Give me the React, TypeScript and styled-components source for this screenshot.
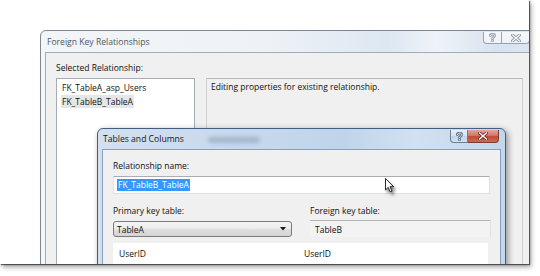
import React from "react";
import styled, { createGlobalStyle } from "styled-components";

const Global = createGlobalStyle`
  html, body { margin: 0; padding: 0; background: #fff; }
  body {
    width: 540px; height: 276px; overflow: hidden;
    font-family: "Open Sans", "Noto Sans", sans-serif;
    font-size: 8.5px; color: #111;
  }
  * { box-sizing: border-box; }
`;

const Stage = styled.div`
  position: relative;
  width: 540px;
  height: 276px;
  background: #fff;
  overflow: hidden;
`;

const Shot = styled.div`
  position: relative;
  width: 529px;
  height: 264px;
  background: #fff;
  overflow: hidden;
  box-shadow: 1px 1px 1px rgba(0, 0, 0, 0.55), 2px 3px 5px rgba(0, 0, 0, 0.38);
`;

/* ---------- outer window ---------- */

const OuterWindow = styled.div`
  position: absolute;
  left: 40px;
  top: 30px;
  width: 497px;
  height: 250px;
  border: 1px solid #7d8792;
  border-radius: 6px 6px 0 0;
  background: linear-gradient(
    90deg,
    #f3f5f8 0%,
    #eef2f6 45%,
    #dde7f2 70%,
    #eef3f8 80%,
    #d7e3f0 92%,
    #dbe6f2 100%
  );
  padding: 0 4px;
  display: flex;
  flex-direction: column;
`;

const TitleBar = styled.div<{ $h: number }>`
  height: ${(p) => p.$h}px;
  flex: none;
  display: flex;
  align-items: flex-start;
`;

const TitleText = styled.div<{ $color: string; $pad: number; $h: number; $grow?: boolean }>`
  flex: ${(p) => (p.$grow ? "1" : "none")};
  height: ${(p) => p.$h}px;
  padding-left: ${(p) => p.$pad}px;
  color: ${(p) => p.$color};
  font-size: 8.6px;
  white-space: nowrap;
  display: flex;
  align-items: center;
`;

const Spacer = styled.div`
  flex: 1;
`;

const CaptionGroup = styled.div<{ $mr: number; $mt: number }>`
  display: flex;
  margin-right: ${(p) => p.$mr}px;
  margin-top: ${(p) => p.$mt}px;
`;

const CaptionButton = styled.div<{ $w: number; $h: number; $variant: "inactive" | "help" | "close" }>`
  width: ${(p) => p.$w}px;
  height: ${(p) => p.$h}px;
  display: flex;
  align-items: center;
  justify-content: center;
  border: 1px solid
    ${(p) => (p.$variant === "close" ? "#7d3a33" : p.$variant === "help" ? "#6b7f98" : "#97a3b1")};
  border-top: none;
  background: ${(p) =>
    p.$variant === "close"
      ? "linear-gradient(180deg, #e3a597 0%, #d27867 45%, #c14a35 55%, #cc6a52 100%)"
      : p.$variant === "help"
      ? "linear-gradient(180deg, #e6eef8 0%, #d5e1ef 50%, #c3d3e6 55%, #d4e2f1 100%)"
      : "linear-gradient(180deg, #f6f8fb 0%, #eef2f6 100%)"};
  &:first-child {
    border-radius: 0 0 0 4px;
  }
  & + & {
    border-left: none;
  }
  &:last-child {
    border-radius: 0 0 4px 0;
  }
`;

const OuterContent = styled.div`
  flex: 1;
  border: 1px solid #a3adb9;
  background: #f0f0f0;
  padding: 9px 8px 0 10px;
  display: flex;
  flex-direction: column;
`;

const Label = styled.div`
  height: 12px;
  line-height: 12px;
  white-space: nowrap;
`;

const SplitRow = styled.div`
  margin-top: 4px;
  flex: 1;
  display: flex;
  gap: 11px;
`;

const ListBox = styled.div`
  width: 139px;
  flex: none;
  background: #fff;
  border: 1px solid #a5acb5;
  padding: 2px 0 0 5px;
`;

const ListItem = styled.div`
  height: 13.5px;
  line-height: 13.5px;
  white-space: nowrap;
`;

const ItemText = styled.span<{ $selected?: boolean }>`
  display: inline-block;
  padding: 0 1px;
  margin-left: -1px;
  background: ${(p) => (p.$selected ? "#e6e6e6" : "transparent")};
`;

const PropBox = styled.div`
  flex: 1;
  border: 1px solid #d0d0d0;
  border-top-color: #b8b8b8;
  padding: 2px 4px;
  line-height: 12px;
  white-space: nowrap;
`;

/* ---------- inner dialog ---------- */

const InnerDialog = styled.div`
  position: absolute;
  left: 97px;
  top: 128px;
  width: 409px;
  height: 150px;
  border: 1px solid #3f5f84;
  border-radius: 6px 6px 0 0;
  background: linear-gradient(
    90deg,
    #d3e0ef 0%,
    #c9daed 30%,
    #bfd4eb 60%,
    #d2e1f1 78%,
    #c2d6ec 100%
  );
  padding: 0 4px;
  display: flex;
  flex-direction: column;
  box-shadow: 2px 2px 6px rgba(0, 0, 0, 0.4);
`;

const GlassSmudge = styled.div`
  width: 52px;
  height: 6px;
  margin-top: 8px;
  margin-left: 24px;
  background: rgba(80, 100, 130, 0.3);
  border-radius: 3px;
  filter: blur(2px);
`;

const InnerContent = styled.div`
  flex: 1;
  border: 1px solid #8aa0ba;
  background: #f0f0f0;
  padding: 10px 10px 0 10px;
  display: flex;
  flex-direction: column;
`;

const TextBox = styled.div`
  margin-top: 4px;
  height: 18px;
  flex: none;
  background: #fff;
  border: 1px solid #dbdfe6;
  border-top-color: #abadb3;
  border-left-color: #e2e3ea;
  padding: 2px 0 0 3px;
  display: flex;
  align-items: flex-start;
`;

const Selected = styled.span`
  background: #3399ff;
  color: #fff;
  height: 12px;
  line-height: 12px;
  padding: 0 1px;
  white-space: nowrap;
`;

const KeyGrid = styled.div`
  margin-top: 11px;
  display: grid;
  grid-template-columns: 179px 181px;
  column-gap: 18px;
`;

const KeyColumn = styled.div`
  display: flex;
  flex-direction: column;
`;

const Combo = styled.div`
  margin-top: 4px;
  height: 16px;
  border: 1px solid #7a7a7a;
  border-radius: 3px;
  background: linear-gradient(180deg, #f4f4f4 0%, #ececec 48%, #dfdfdf 52%, #d4d4d4 100%);
  display: flex;
  align-items: center;
  padding: 0 5px 0 3px;
`;

const ComboText = styled.span`
  flex: 1;
`;

const ReadOnlyField = styled.div`
  margin-top: 3px;
  height: 17px;
  border-top: 1px solid #b4b4b4;
  border-right: 1px solid #e2e2e2;
  background: #f3f3f3;
  display: flex;
  align-items: center;
  padding-left: 5px;
`;

const ColumnsGrid = styled.div`
  margin-top: 6px;
  margin-right: 2px;
  flex: 1;
  background: #fff;
  display: grid;
  grid-template-columns: 185px 1fr;
  grid-auto-rows: 20px;
`;

const Cell = styled.div`
  padding-left: 6px;
  display: flex;
  align-items: center;
`;

const Cursor = styled.svg`
  position: absolute;
  left: 385px;
  top: 178px;
  overflow: visible;
  filter: drop-shadow(2px 3px 1.5px rgba(0, 0, 0, 0.5));
`;

/* ---------- glyphs ---------- */

const HelpGlyph = ({ stroke, fill }: { stroke: string; fill: string }) => (
  <svg width="7" height="9" viewBox="0 0 7 9">
    <path
      d="M1.3 2.6 C1.3 0.6 5.7 0.6 5.7 2.6 C5.7 4.1 3.5 4.1 3.5 5.6"
      fill="none"
      stroke={stroke}
      strokeWidth="2.6"
      strokeLinecap="round"
    />
    <rect x="2.1" y="6.6" width="2.8" height="2.2" rx="0.6" fill={stroke} />
    <path
      d="M1.3 2.6 C1.3 0.6 5.7 0.6 5.7 2.6 C5.7 4.1 3.5 4.1 3.5 5.6"
      fill="none"
      stroke={fill}
      strokeWidth="1"
      strokeLinecap="round"
    />
    <rect x="2.9" y="7.2" width="1.2" height="1" fill={fill} />
  </svg>
);

const CloseGlyph = ({ stroke, fill }: { stroke: string; fill: string }) => (
  <svg width="10" height="8" viewBox="0 0 10 8">
    <path d="M1.5 1 L8.5 7 M8.5 1 L1.5 7" stroke={stroke} strokeWidth="3" strokeLinecap="square" />
    <path d="M1.5 1 L8.5 7 M8.5 1 L1.5 7" stroke={fill} strokeWidth="1.3" strokeLinecap="square" />
  </svg>
);

const ComboArrow = () => (
  <svg width="6" height="4" viewBox="0 0 6 4">
    <path d="M0 0 L6 0 L3 3.5 Z" fill="#1a1a1a" />
  </svg>
);

export default function App() {
  return (
    <>
      <Global />
      <Stage>
        <Shot>
          <OuterWindow>
            <TitleBar $h={21}>
              <TitleText $color="#4d5560" $pad={2} $h={21} $grow>
                Foreign Key Relationships
              </TitleText>
              <CaptionGroup $mr={2} $mt={1}>
                <CaptionButton $w={19} $h={12} $variant="inactive">
                  <HelpGlyph stroke="#8e98a4" fill="#f4f6f9" />
                </CaptionButton>
                <CaptionButton $w={28} $h={12} $variant="inactive">
                  <CloseGlyph stroke="#8e98a4" fill="#f4f6f9" />
                </CaptionButton>
              </CaptionGroup>
            </TitleBar>
            <OuterContent>
              <Label>Selected Relationship:</Label>
              <SplitRow>
                <ListBox>
                  <ListItem>
                    <ItemText>FK_TableA_asp_Users</ItemText>
                  </ListItem>
                  <ListItem>
                    <ItemText $selected>FK_TableB_TableA</ItemText>
                  </ListItem>
                </ListBox>
                <PropBox>Editing properties for existing relationship.</PropBox>
              </SplitRow>
            </OuterContent>
          </OuterWindow>

          <InnerDialog>
            <TitleBar $h={20}>
              <TitleText $color="#141414" $pad={1} $h={20}>
                Tables and Columns
              </TitleText>
              <GlassSmudge />
              <Spacer />
              <CaptionGroup $mr={2} $mt={1}>
                <CaptionButton $w={18} $h={13} $variant="help">
                  <HelpGlyph stroke="#51627a" fill="#ffffff" />
                </CaptionButton>
                <CaptionButton $w={31} $h={13} $variant="close">
                  <CloseGlyph stroke="#6e2a22" fill="#ffffff" />
                </CaptionButton>
              </CaptionGroup>
            </TitleBar>
            <InnerContent>
              <Label>Relationship name:</Label>
              <TextBox>
                <Selected>FK_TableB_TableA</Selected>
              </TextBox>
              <KeyGrid>
                <KeyColumn>
                  <Label>Primary key table:</Label>
                  <Combo>
                    <ComboText>TableA</ComboText>
                    <ComboArrow />
                  </Combo>
                </KeyColumn>
                <KeyColumn>
                  <Label>Foreign key table:</Label>
                  <ReadOnlyField>TableB</ReadOnlyField>
                </KeyColumn>
              </KeyGrid>
              <ColumnsGrid>
                <Cell>UserID</Cell>
                <Cell>UserID</Cell>
              </ColumnsGrid>
            </InnerContent>
          </InnerDialog>

          <Cursor width="10" height="15" viewBox="0 0 10 15">
            <path
              d="M0.5 0.5 L0.5 12 L3.2 9.4 L5.2 13.9 L7 13.1 L5 8.7 L8.6 8.7 Z"
              fill="#ffffff"
              stroke="#111"
              strokeWidth="0.9"
              strokeLinejoin="round"
            />
          </Cursor>
        </Shot>
      </Stage>
    </>
  );
}
